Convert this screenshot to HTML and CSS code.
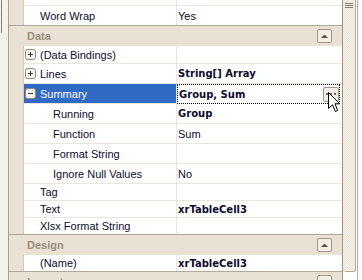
FILE: index.html
```html
<!DOCTYPE html>
<html lang="en">
<head>
  <meta charset="UTF-8" />
  <meta name="viewport" content="width=device-width, initial-scale=1" />
  <title>Property Grid</title>
  <link rel="stylesheet" href="styles.css">
</head>
<body>
  <div class="frame">
    <div class="edge-left"><div class="edge-mark"></div></div>

    <div class="grid">
      <div class="row stub"><div class="gutter"></div><div class="name"></div><div class="value"></div></div>
      <div class="row"><div class="gutter"></div><div class="name">Word Wrap</div><div class="value">Yes</div></div>

      <div class="category">
        <span>Data</span>
        <span class="toggle"><svg width="7" height="4" viewBox="0 0 7 4"><path d="M0 4 L3.5 0.5 L7 4 Z" fill="#5a5044"/></svg></span>
      </div>
      <div class="row h18"><div class="gutter"></div>
        <div class="name expandable"><svg class="expander" width="11" height="11" viewBox="0 0 11 11"><rect x="0.5" y="0.5" width="10" height="10" rx="2" fill="#f6f3ee" stroke="#918777"/><path d="M3 5.5 H8 M5.5 3 V8" stroke="#3a3a3a"/></svg>(Data Bindings)</div>
        <div class="value"></div></div>
      <div class="row"><div class="gutter"></div>
        <div class="name expandable"><svg class="expander" width="11" height="11" viewBox="0 0 11 11"><rect x="0.5" y="0.5" width="10" height="10" rx="2" fill="#f6f3ee" stroke="#918777"/><path d="M3 5.5 H8 M5.5 3 V8" stroke="#3a3a3a"/></svg>Lines</div>
        <div class="value"><b>String[] Array</b></div></div>
      <div class="row selected"><div class="gutter"></div>
        <div class="name expandable"><svg class="expander" width="11" height="11" viewBox="0 0 11 11"><rect x="0.5" y="0.5" width="10" height="10" rx="2" fill="#f6f3ee" stroke="#918777"/><path d="M3 5.5 H8" stroke="#3a3a3a"/></svg>Summary</div>
        <div class="value focus"><b>Group, Sum</b>
          <span class="dots-btn"><svg width="10" height="2" viewBox="0 0 10 2"><rect x="0" y="0" width="2" height="2" fill="#7d6f5e"/><rect x="4" y="0" width="2" height="2" fill="#7d6f5e"/><rect x="8" y="0" width="2" height="2" fill="#7d6f5e"/></svg></span>
        </div></div>
      <div class="row"><div class="gutter"></div><div class="name child">Running</div><div class="value"><b>Group</b></div></div>
      <div class="row"><div class="gutter"></div><div class="name child">Function</div><div class="value">Sum</div></div>
      <div class="row"><div class="gutter"></div><div class="name child">Format String</div><div class="value"></div></div>
      <div class="row"><div class="gutter"></div><div class="name child">Ignore Null Values</div><div class="value">No</div></div>
      <div class="row h17"><div class="gutter"></div><div class="name">Tag</div><div class="value"></div></div>
      <div class="row h17"><div class="gutter"></div><div class="name">Text</div><div class="value"><b>xrTableCell3</b></div></div>
      <div class="row h17"><div class="gutter"></div><div class="name">Xlsx Format String</div><div class="value"></div></div>

      <div class="category">
        <span>Design</span>
        <span class="toggle"><svg width="7" height="4" viewBox="0 0 7 4"><path d="M0 4 L3.5 0.5 L7 4 Z" fill="#5a5044"/></svg></span>
      </div>
      <div class="row h17"><div class="gutter"></div><div class="name">(Name)</div><div class="value"><b>xrTableCell3</b></div></div>

      <div class="category">
        <span>Layout</span>
        <span class="toggle"><svg width="7" height="4" viewBox="0 0 7 4"><path d="M0 4 L3.5 0.5 L7 4 Z" fill="#5a5044"/></svg></span>
      </div>
    </div>

    <div class="edge-right">
      <div class="splitter"><div class="grip"></div></div>
      <div class="edge-line"></div>
    </div>

    <svg class="cursor" width="13" height="21" viewBox="0 0 13 21">
      <path d="M0.5 0.5 L0.5 16.5 L4.5 12.8 L7.3 19.5 L9.7 18.5 L7 11.8 L11.8 11.8 Z" fill="#fff" stroke="#000" stroke-linejoin="round"/>
    </svg>
  </div>
</body>
</html>
```

FILE: styles.css
```css
* {
  box-sizing: border-box;
}
body {
  margin: 0;
  font-family: "Liberation Sans", Arial, sans-serif;
  font-size: 11px;
  color: #0c0c30;
  background: #fff;
  overflow: hidden;
}
.frame {
  position: relative;
  display: flex;
  height: 280px;
  overflow: hidden;
}
.edge-left {
  width: 9px;
  flex: none;
  border-right: 1px solid #a99d8d;
  background: repeating-conic-gradient(#efebe3 0 25%, #fcfbf8 0 50%) 0 0 / 2px 2px;
}
.edge-mark {
  width: 1px;
  height: 33px;
  margin-left: 1px;
  background: #8f8477;
}
.grid {
  width: 333px;
  flex: none;
  display: flex;
  flex-direction: column;
}
.row {
  display: flex;
  height: 20px;
  flex: none;
}
.row.stub { height: 6px; }
.row.h18 { height: 18px; }
.row.h17 { height: 17px; }
.gutter {
  width: 15px;
  flex: none;
  background: #e9e1d4;
  border-right: 1px solid #d4cabb;
}
.name,
.value {
  display: flex;
  align-items: center;
  white-space: nowrap;
  border-bottom: 1px solid #ebe6dc;
}
.name {
  width: 153px;
  flex: none;
  padding-left: 16px;
  border-right: 1px solid #ebe6dc;
}
.name.child { padding-left: 29px; }
.name.expandable { padding-left: 1px; }
.expander {
  flex: none;
  margin-right: 4px;
}
.value {
  flex: 1;
  padding-left: 1px;
}
.value b {
  font-family: "DejaVu Sans", Verdana, sans-serif;
  font-size: 10px;
  font-weight: bold;
}
.row.selected .name {
  background: #316ac5;
  color: #fff;
}
.value.focus {
  border: 1px dotted #000;
  margin-right: 2px;
}
.dots-btn {
  display: flex;
  align-items: center;
  justify-content: center;
  margin-left: auto;
  width: 16px;
  height: 15px;
  border: 1px solid #a39481;
  border-radius: 2px;
  background: #f1ece3;
}
.category {
  display: flex;
  align-items: center;
  flex: none;
  height: 21px;
  margin-top: -1px;
  padding: 0 10px 0 18px;
  border-top: 1px solid #b3a898;
  background: #e9e1d4;
  color: #9c8e7c;
  font-weight: bold;
}
.toggle {
  display: flex;
  align-items: center;
  justify-content: center;
  margin-left: auto;
  width: 15px;
  height: 14px;
  border: 1px solid #a49684;
  border-radius: 2px;
  background: #f3efe7;
}
.edge-right {
  display: flex;
  width: 20px;
  flex: none;
  border-left: 1px solid #9e9282;
}
.splitter {
  width: 13px;
  height: 272px;
  padding-top: 3px;
  display: flex;
  justify-content: center;
  border-right: 1px solid #b6ab9b;
  border-bottom: 1px solid #b6ab9b;
  border-radius: 0 0 3px 3px;
  background: repeating-conic-gradient(#ebe4d7 0 25%, #f7f3ec 0 50%) 0 0 / 2px 2px;
}
.grip {
  width: 8px;
  height: 6px;
  background: repeating-linear-gradient(#857a6d 0 1px, transparent 1px 2px);
}
.edge-line {
  width: 1px;
  height: 100%;
  margin-left: 1px;
  background: #b8b0a6;
}
.cursor {
  position: absolute;
  left: 328px;
  top: 92px;
}
```
